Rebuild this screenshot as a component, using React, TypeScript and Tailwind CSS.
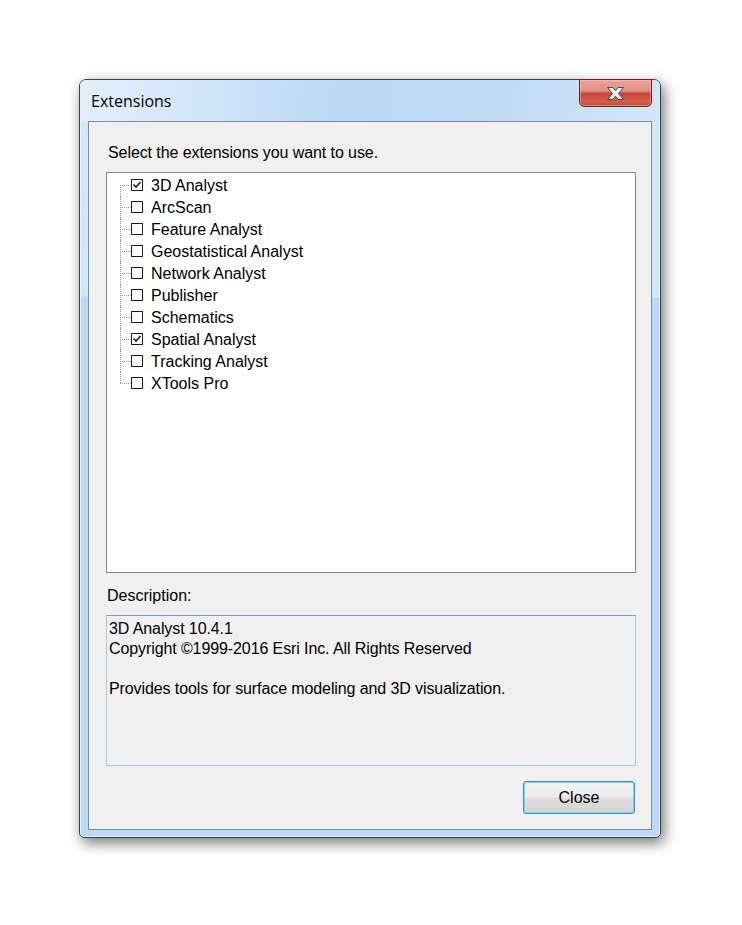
const ITEMS = [
  { label: "3D Analyst", checked: true },
  { label: "ArcScan", checked: false },
  { label: "Feature Analyst", checked: false },
  { label: "Geostatistical Analyst", checked: false },
  { label: "Network Analyst", checked: false },
  { label: "Publisher", checked: false },
  { label: "Schematics", checked: false },
  { label: "Spatial Analyst", checked: true },
  { label: "Tracking Analyst", checked: false },
  { label: "XTools Pro", checked: false },
];

const SANS = "font-['Liberation_Sans',Arial,sans-serif]";

function CloseGlyph() {
  return (
    <svg width="21" height="15" viewBox="0 0 21 15" aria-hidden="true">
      <defs>
        <linearGradient id="xg" x1="0" y1="0" x2="0" y2="1">
          <stop offset="0" stopColor="#ffffff" />
          <stop offset="1" stopColor="#e4e4e4" />
        </linearGradient>
      </defs>
      <path
        d="M2.5 1.5 H8 L10.5 4.8 L13 1.5 H18.5 L13.5 7.5 L18.5 13.5 H13 L10.5 10.2 L8 13.5 H2.5 L7.5 7.5 Z"
        fill="url(#xg)"
        stroke="#4b4b4b"
        strokeWidth="1"
        strokeLinejoin="round"
      />
    </svg>
  );
}

function CheckBox({ checked }: { checked: boolean }) {
  return (
    <div className="flex h-[12px] w-[12px] shrink-0 items-center justify-center border border-[#1e1e1e] bg-white">
      {checked && (
        <svg width="10" height="10" viewBox="0 0 10 10" aria-hidden="true">
          <path d="M1.5 4.5 L4 7 L8.5 2" fill="none" stroke="#1e1e1e" strokeWidth="1.6" />
        </svg>
      )}
    </div>
  );
}

function TreeRow({ label, checked, index, last }: { label: string; checked: boolean; index: number; last: boolean }) {
  return (
    <div className="flex h-[22px] items-center">
      <div className="relative h-full w-[11px] shrink-0">
        <div
          className={
            index === 0
              ? "absolute left-0 top-[11px] bottom-0 border-l border-dotted border-[#9a9a9a]"
              : last
                ? "absolute left-0 top-0 h-[11px] border-l border-dotted border-[#9a9a9a]"
                : "absolute left-0 top-0 bottom-0 border-l border-dotted border-[#9a9a9a]"
          }
        />
        <div className="absolute left-0 right-0 top-[11px] border-t border-dotted border-[#9a9a9a]" />
      </div>
      <CheckBox checked={checked} />
      <span className="ml-[8px] pt-px text-[16px] leading-[20px] text-black">{label}</span>
    </div>
  );
}

export default function App() {
  return (
    <div className={`min-h-screen bg-white pl-[79px] pt-[79px] ${SANS}`}>
      <div className="flex h-[759px] w-[582px] flex-col rounded-t-[7px] rounded-b-[5px] border border-[#3a434d] bg-[linear-gradient(180deg,#d6e8fb_0px,#d2e6fa_217px,#bcd9f6_217px,#bcd9f6_100%)] shadow-[inset_0_0_0_1px_rgba(255,255,255,0.55),3px_5px_14px_rgba(0,0,0,0.55)]">
        <div className="flex h-[41px] items-start justify-between rounded-t-[6px] bg-[linear-gradient(100deg,#e4effc_0%,#d2e6fa_20%,#bad8f6_45%,#bfdaf7_70%,#d3e6fa_100%)] pl-[11px] pr-[8px]">
          <span className="pt-[11px] font-['Open_Sans',sans-serif] text-[16px] leading-[20px] text-black">
            Extensions
          </span>
          <div className="flex h-[28px] w-[73px] -translate-y-px items-center justify-center rounded-b-[5px] border border-[#5b2a24] bg-[linear-gradient(180deg,#eba59c_0%,#df8e82_42%,#c8473a_52%,#d55c4a_82%,#bf4d3d_100%)] shadow-[inset_0_0_0_1px_rgba(255,200,190,0.45)]">
            <CloseGlyph />
          </div>
        </div>

        <div className="mx-[8px] mb-[7px] flex flex-1 flex-col border border-[#7d8c9b] bg-[#f0f0f0]">
          <p className="pl-[19px] pt-[21px] text-[16px] leading-[20px] tracking-[-0.08px] text-black">
            Select the extensions you want to use.
          </p>

          <div className="ml-[17px] mt-[9px] h-[401px] w-[530px] border border-[#828790] bg-white pl-[13px] pt-px">
            {ITEMS.map((item, i) => (
              <TreeRow key={item.label} label={item.label} checked={item.checked} index={i} last={i === ITEMS.length - 1} />
            ))}
          </div>

          <p className="mt-[13px] pl-[18px] text-[16px] leading-[20px] text-black">Description:</p>

          <div className="ml-[17px] mt-[9px] h-[151px] w-[530px] border border-[#a8c8e6] border-t-[#7f9dbb] bg-[#f0f0f0] px-[2px] pt-[3px] text-[16px] leading-[20px] tracking-[-0.1px] text-black">
            <p>3D Analyst 10.4.1</p>
            <p>Copyright ©1999-2016 Esri Inc. All Rights Reserved</p>
            <p>&nbsp;</p>
            <p>Provides tools for surface modeling and 3D visualization.</p>
          </div>

          <div className="mr-[16px] mt-[15px] flex justify-end">
            <button className="flex h-[33px] w-[112px] items-center justify-center rounded-[3px] border border-[#3c8fc4] bg-[linear-gradient(180deg,#f4f4f4_0%,#ececec_48%,#dedede_52%,#d4d4d4_100%)] text-[16px] leading-[20px] text-black shadow-[inset_0_0_0_1px_#7fd3f5]">
              Close
            </button>
          </div>
        </div>
      </div>
    </div>
  );
}
